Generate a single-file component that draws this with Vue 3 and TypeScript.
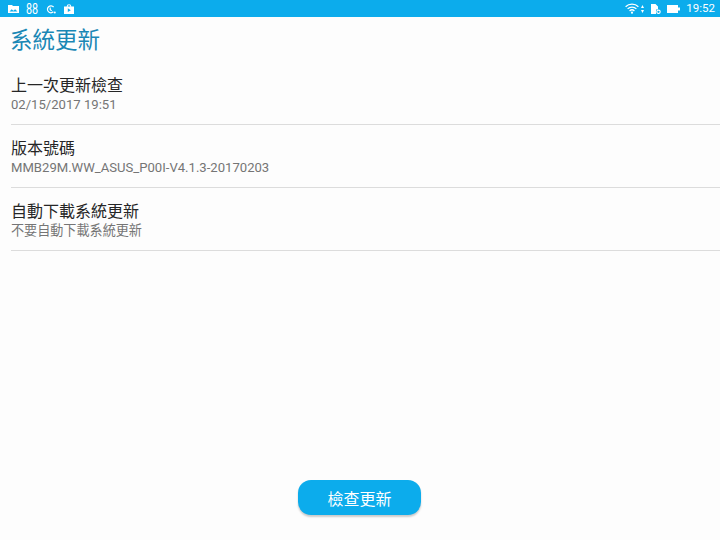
<template>
  <div class="screen">
    <div class="status-bar">
      <div class="status-left">
        <svg class="ic-photo" width="11" height="8" viewBox="0 0 11 8">
          <path fill="#fff" d="M0 0h4l1 1h6v7H0z" />
          <path fill="#0cacec" d="M1.500 6.500l2.200-2.300 1.700 1.500 1.700-1.500 2.400 2.300z" />
        </svg>
        <span class="num">88</span>
        <svg class="ic-sync" width="10" height="9" viewBox="0 0 10 9" fill="none" stroke="#fff" stroke-width="1.200">
          <path d="M7.400 6.800A3.500 3.500 0 1 1 7.600 2" />
          <path d="M4.200 2.600v2.200l1.500 1" />
          <circle cx="8.800" cy="7.600" r="1" fill="#fff" stroke="none" />
        </svg>
        <svg class="ic-store" width="10" height="10" viewBox="0 0 10 10">
          <path fill="#fff" d="M0 2.500h2.700a2.300 2.300 0 0 1 4.600 0H10V10H0zM3.700 2.500h2.600a1.300 1.300 0 0 0-2.600 0z" />
          <path fill="#0cacec" d="M3.800 4.300l3 1.900-3 1.900z" />
        </svg>
      </div>
      <div class="status-right">
        <svg width="14" height="11" viewBox="0 0 14 11" fill="none" stroke="#fff" stroke-width="1.300">
          <path d="M0.600 3.700a9 9 0 0 1 12.800 0" />
          <path d="M2.600 5.900a6.200 6.200 0 0 1 8.800 0" />
          <path d="M4.600 8a3.400 3.400 0 0 1 4.800 0" />
          <circle cx="7" cy="9.700" r="1.100" fill="#fff" stroke="none" />
        </svg>
        <svg class="ic-arrows" width="3" height="8" viewBox="0 0 3 8">
          <path fill="#fff" d="M1.500 0l1.500 3H0zM1.500 8L0 5h3z" />
        </svg>
        <svg class="ic-sim" width="10" height="10" viewBox="0 0 10 10">
          <path fill="#fff" d="M0 0h4.500L7 2.500V5.500H5V10H0z" />
          <circle cx="7.500" cy="7.800" r="1.700" fill="none" stroke="#fff" stroke-width="1.100" />
        </svg>
        <svg class="ic-battery" width="13" height="8" viewBox="0 0 13 8">
          <path fill="#fff" d="M0 0h11v2.500h2v3h-2V8H0z" />
        </svg>
        <span class="clock">19:52</span>
      </div>
    </div>

    <h1 class="title">系統更新</h1>

    <ul class="settings">
      <li v-for="item in items" :key="item.label" class="row">
        <div class="label">{{ item.label }}</div>
        <div class="value">{{ item.value }}</div>
      </li>
    </ul>

    <div class="footer">
      <button class="check-btn">檢查更新</button>
    </div>
  </div>
</template>

<script setup lang="ts">
interface SettingItem {
  label: string
  value: string
}

const items: SettingItem[] = [
  { label: '上一次更新檢查', value: '02/15/2017 19:51' },
  { label: '版本號碼', value: 'MMB29M.WW_ASUS_P00I-V4.1.3-20170203' },
  { label: '自動下載系統更新', value: '不要自動下載系統更新' }
]
</script>

<style>
html,
body {
  margin: 0;
  background: #fdfdfd;
}
</style>

<style scoped>
.screen {
  display: flex;
  flex-direction: column;
  width: 720px;
  height: 540px;
  overflow: hidden;
  background: #fdfdfd;
  font-family: Roboto, "Noto Sans CJK TC", sans-serif;
}

.status-bar {
  display: flex;
  flex: none;
  align-items: center;
  justify-content: space-between;
  height: 17px;
  padding: 0 5px 0 8px;
  background: #0cacec;
  color: #fff;
}

.status-left,
.status-right {
  display: flex;
  align-items: center;
}

.status-left {
  padding-top: 1px;
}

.num {
  width: 12px;
  margin-left: 7px;
  font-size: 15px;
  line-height: 16px;
  transform: scaleX(0.72);
  transform-origin: left center;
}

.ic-sync {
  margin-left: 8px;
}

.ic-store {
  margin-left: 8px;
  margin-bottom: 1px;
}

.ic-arrows {
  margin-left: 2px;
}

.ic-sim {
  margin-left: 7px;
}

.ic-battery {
  margin-left: 6px;
}

.clock {
  margin-left: 6px;
  font-size: 11.5px;
  line-height: 17px;
}

.title {
  flex: none;
  height: 36px;
  margin: 0;
  padding: 9px 0 0 10px;
  color: #1a87b5;
  font-size: 22.5px;
  font-weight: 400;
  line-height: 29px;
}

.settings {
  flex: none;
  margin: 0;
  padding: 0 0 0 11px;
  list-style: none;
}

.row {
  box-sizing: border-box;
  height: 63px;
  padding-top: 13px;
  border-bottom: 1px solid #dcdcdc;
}

.label {
  color: #262626;
  font-size: 16px;
  line-height: 22px;
}

.value {
  color: #757575;
  font-size: 13.1px;
  line-height: 16px;
}

.footer {
  display: flex;
  flex: 1;
  align-items: flex-end;
  justify-content: center;
  padding: 0 1px 25px 0;
}

.check-btn {
  width: 123px;
  height: 35px;
  padding: 0;
  border: none;
  border-radius: 13px;
  background: #0cacec;
  box-shadow: 0 2px 2px rgba(0, 0, 0, 0.2);
  color: #fff;
  font-family: inherit;
  font-size: 16px;
}
</style>
